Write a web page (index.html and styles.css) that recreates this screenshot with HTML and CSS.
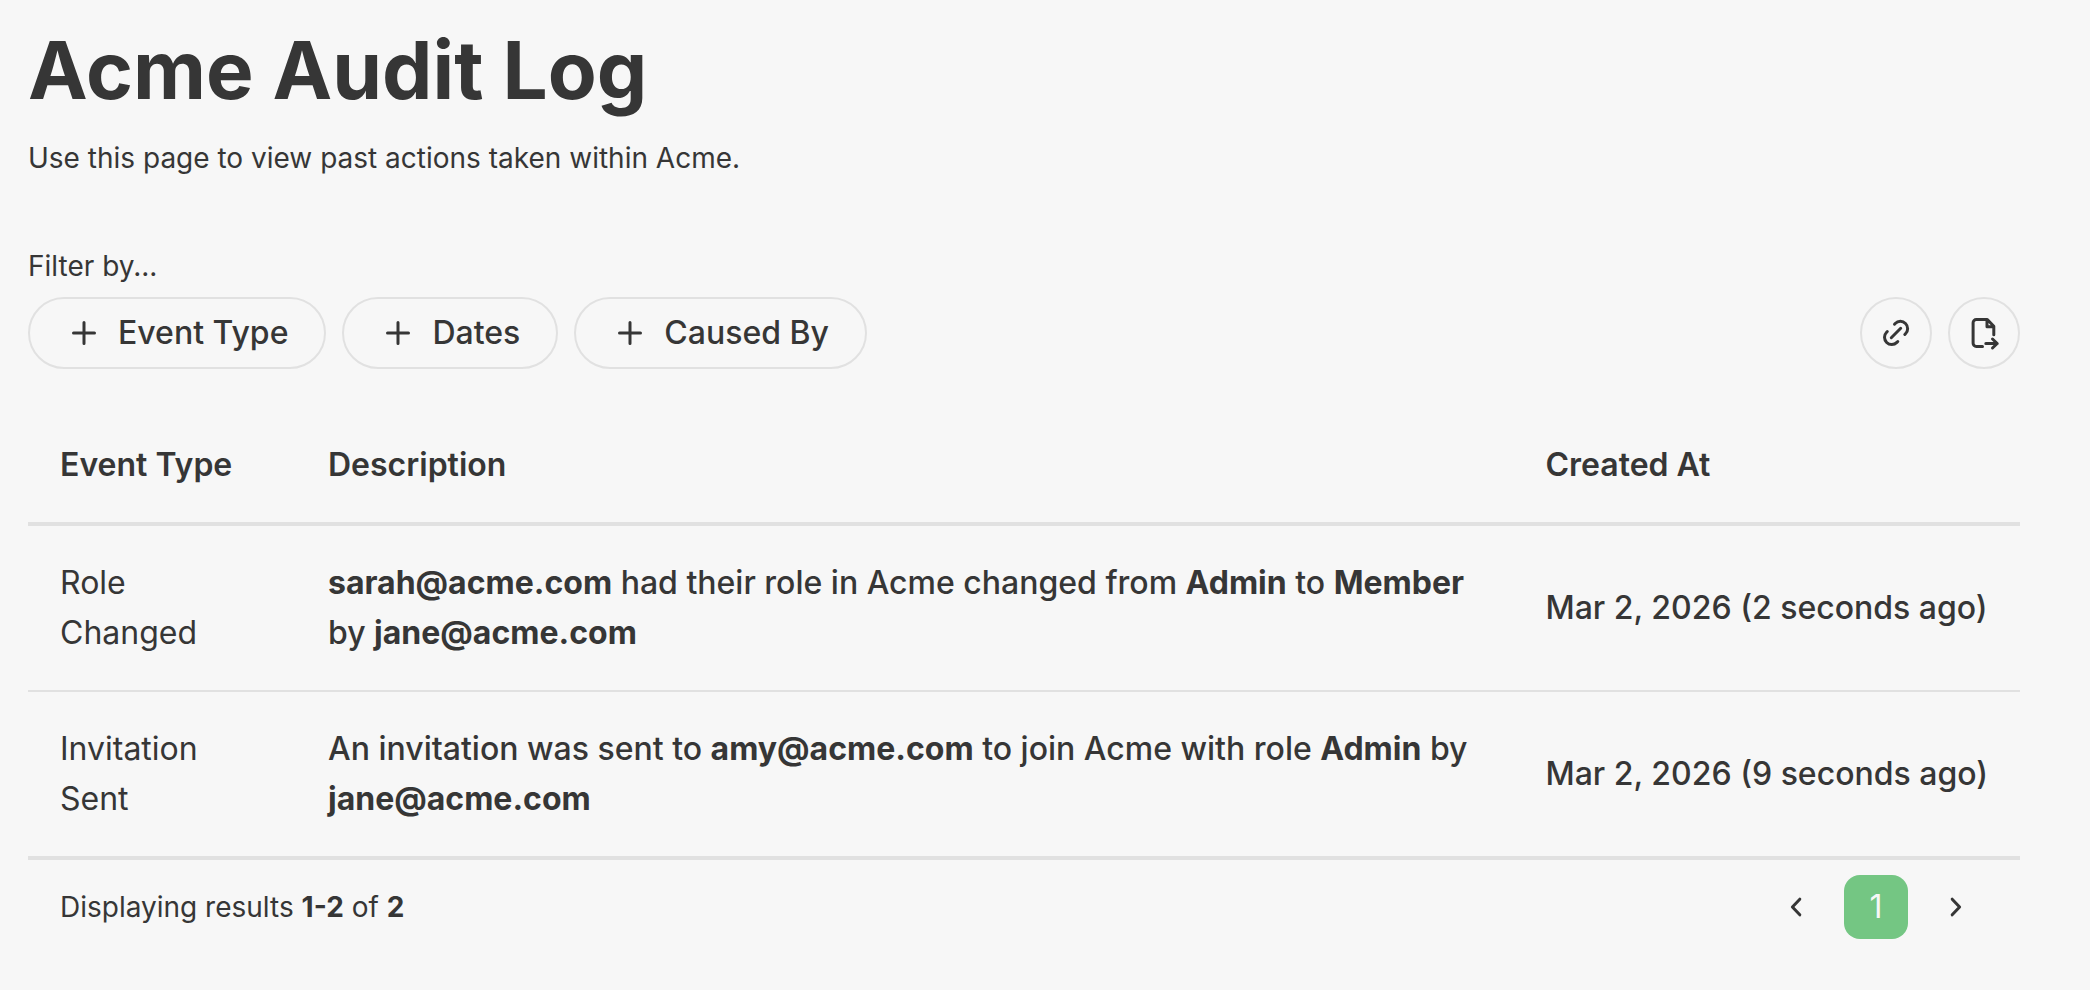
FILE: index.html
```html
<!DOCTYPE html>
<html lang="en">
<head>
<meta charset="utf-8">
<meta name="viewport" content="width=device-width, initial-scale=1">
<title>Acme Audit Log</title>
<link rel="stylesheet" href="styles.css">
</head>
<body>
<main class="page">
  <header class="intro">
    <h1 class="title">Acme Audit Log</h1>
    <p class="subtitle">Use this page to view past actions taken within Acme.</p>
  </header>

  <section class="filters" aria-labelledby="filter-label">
    <p class="filter-label" id="filter-label">Filter by...</p>
    <div class="toolbar">
      <div class="group">
        <button class="pill" type="button">
          <svg class="icon" viewBox="0 0 32 32" aria-hidden="true"><path d="M16 5.5v21M5.5 16h21"/></svg>
          Event Type
        </button>
        <button class="pill" type="button">
          <svg class="icon" viewBox="0 0 32 32" aria-hidden="true"><path d="M16 5.5v21M5.5 16h21"/></svg>
          Dates
        </button>
        <button class="pill" type="button">
          <svg class="icon" viewBox="0 0 32 32" aria-hidden="true"><path d="M16 5.5v21M5.5 16h21"/></svg>
          Caused By
        </button>
      </div>
      <div class="group">
        <button class="round" type="button" aria-label="Copy link">
          <svg class="icon" viewBox="0 0 32 32" aria-hidden="true"><path d="M11.3 20.7l9.4-9.4M14.5 7.2l.7-.7a7.2 7.2 0 0 1 10.3 10.3l-.7.7M17.8 24.5l-.9.9A7.2 7.2 0 0 1 6.6 15.2l.7-.7"/></svg>
        </button>
        <button class="round" type="button" aria-label="Export">
          <svg class="icon icon-file" viewBox="-1 0 36 36" aria-hidden="true"><path d="M15.5 31.5H9.3a3.2 3.2 0 0 1-3.2-3.2V7.7a3.2 3.2 0 0 1 3.2-3.2h11l6.5 6.8v8.5M20 4.5v7.3h6.8M18.8 28.5h11.4M25.5 24l4.7 4.5-4.7 4.5"/></svg>
        </button>
      </div>
    </div>
  </section>

  <section class="results">
    <table class="log">
      <thead>
        <tr>
          <th class="col-type" scope="col">Event Type</th>
          <th scope="col">Description</th>
          <th scope="col">Created At</th>
        </tr>
      </thead>
      <tbody>
        <tr>
          <td>Role Changed</td>
          <td class="description"><strong>sarah@acme.com</strong> had their role in Acme changed from <strong>Admin</strong> to <strong>Member</strong> by <strong>jane@acme.com</strong></td>
          <td class="created">Mar 2, 2026 (2 seconds ago)</td>
        </tr>
        <tr>
          <td>Invitation Sent</td>
          <td class="description">An invitation was sent to <strong>amy@acme.com</strong> to join Acme with role <strong>Admin</strong> by <strong>jane@acme.com</strong></td>
          <td class="created">Mar 2, 2026 (9 seconds ago)</td>
        </tr>
      </tbody>
    </table>
    <footer class="footer">
      <p class="count">Displaying results <strong>1-2</strong> of <strong>2</strong></p>
      <nav class="group" aria-label="Pagination">
        <button class="page-button" type="button" aria-label="Previous page">
          <svg class="icon chevron" viewBox="0 0 32 32" aria-hidden="true"><path d="M19.8 8.2L12.4 16l7.4 7.8"/></svg>
        </button>
        <button class="page-button current" type="button" aria-current="page">1</button>
        <button class="page-button" type="button" aria-label="Next page">
          <svg class="icon chevron" viewBox="0 0 32 32" aria-hidden="true"><path d="M12.2 8.2l7.4 7.8-7.4 7.8"/></svg>
        </button>
      </nav>
    </footer>
  </section>
</main>
</body>
</html>
```
FILE: styles.css
```css
* {
  box-sizing: border-box;
}

body {
  margin: 0;
  background: #f7f7f7;
  color: #363636;
  font-family: Inter, "Liberation Sans", sans-serif;
  font-size: 32px;
  line-height: 50px;
}

h1,
p {
  margin: 0;
}

button {
  font: inherit;
  color: inherit;
  background: none;
  cursor: pointer;
}

.page {
  padding: 18px 70px 32px 28px;
}

.intro {
  display: flex;
  flex-direction: column;
  gap: 14px;
}

.title {
  font-size: 80px;
  font-weight: 700;
  line-height: 104px;
}

.subtitle,
.filter-label,
.count {
  font-size: 28px;
  line-height: 44px;
}

.filters {
  display: flex;
  flex-direction: column;
  gap: 9px;
  margin-top: 64px;
}

.toolbar {
  display: flex;
  justify-content: space-between;
}

.group {
  display: flex;
  gap: 16px;
}

.pill,
.round {
  display: flex;
  align-items: center;
  justify-content: center;
  height: 72px;
  border: 2px solid #e1e1e1;
  border-radius: 36px;
}

.pill {
  gap: 18px;
  padding: 0 36px 0 38px;
  font-weight: 500;
}

.round {
  width: 72px;
  padding: 0;
}

.icon {
  width: 32px;
  height: 32px;
  fill: none;
  stroke: currentColor;
  stroke-width: 3;
  stroke-linecap: round;
  stroke-linejoin: round;
}

.icon-file {
  width: 36px;
  height: 36px;
}

.results {
  margin-top: 39px;
}

.log {
  width: 100%;
  border-collapse: separate;
  border-spacing: 0;
  border-bottom: 4px solid #e1e1e1;
}

.log th,
.log td {
  padding: 32px;
  text-align: left;
  vertical-align: middle;
}

.log th {
  font-weight: 600;
  border-bottom: 4px solid #e1e1e1;
}

.log tbody tr:not(:last-child) td {
  border-bottom: 2px solid #e1e1e1;
}

.col-type {
  width: 268px;
}

.description,
.created {
  font-weight: 500;
}

.created {
  white-space: nowrap;
}

strong {
  font-weight: 700;
}

.footer {
  display: flex;
  align-items: center;
  justify-content: space-between;
  padding: 15px 32px;
}

.page-button {
  display: flex;
  align-items: center;
  justify-content: center;
  width: 64px;
  height: 64px;
  padding: 0;
  border: 0;
  border-radius: 16px;
}

.current {
  background: #74c683;
  color: #f7f7f7;
}
```
